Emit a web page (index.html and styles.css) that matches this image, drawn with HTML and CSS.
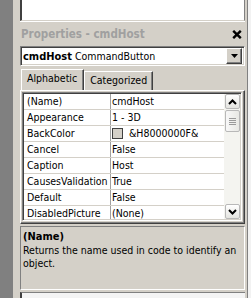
FILE: index.html
```html
<!DOCTYPE html>
<html>
<head>
<meta charset="utf-8">
<title>Properties - cmdHost</title>
<link rel="stylesheet" href="styles.css">
</head>
<body>
<div class="ide">
  <div class="mdi"></div>
  <div class="dock">
    <div class="project"></div>
    <div class="titlebar">
      <span class="title">Properties - cmdHost</span>
      <span class="close"><svg width="10" height="9" viewBox="0 0 10 9"><path d="M1.2 0.8 L8.8 8.2 M8.8 0.8 L1.2 8.2" stroke="#000" stroke-width="2.4" fill="none"/></svg></span>
    </div>
    <div class="combo">
      <span class="obj"><b>cmdHost</b> CommandButton</span>
      <span class="drop"><svg width="7" height="4" viewBox="0 0 7 4"><path d="M0 0 H7 L3.5 4 Z" fill="#000"/></svg></span>
    </div>
    <div class="tabs">
      <div class="tab active">Alphabetic</div>
      <div class="tab">Categorized</div>
    </div>
    <div class="page">
      <div class="grid">
        <div class="rows">
          <div class="row sel"><span class="name">(Name)</span><span class="val">cmdHost</span></div>
          <div class="row"><span class="name">Appearance</span><span class="val">1 - 3D</span></div>
          <div class="row"><span class="name">BackColor</span><span class="val"><span class="swatch"></span>&amp;H8000000F&amp;</span></div>
          <div class="row"><span class="name">Cancel</span><span class="val">False</span></div>
          <div class="row"><span class="name">Caption</span><span class="val">Host</span></div>
          <div class="row"><span class="name">CausesValidation</span><span class="val">True</span></div>
          <div class="row"><span class="name">Default</span><span class="val">False</span></div>
          <div class="row"><span class="name">DisabledPicture</span><span class="val">(None)</span></div>
        </div>
        <div class="scroll">
          <div class="sbtn"><svg width="9" height="6" viewBox="0 0 9 6"><path d="M1 5 L4.5 1.5 L8 5" stroke="#000" stroke-width="2" fill="none"/></svg></div>
          <div class="thumb"><span></span><span></span><span></span><span></span></div>
          <div class="track"></div>
          <div class="sbtn"><svg width="9" height="6" viewBox="0 0 9 6"><path d="M1 1 L4.5 4.5 L8 1" stroke="#000" stroke-width="2" fill="none"/></svg></div>
        </div>
      </div>
    </div>
    <div class="desc">
      <div class="dname">(Name)</div>
      <div class="dtext">Returns the name used in code to identify an object.</div>
    </div>
    <div class="next"></div>
  </div>
  <div class="edge"></div>
</div>
</body>
</html>
```

FILE: styles.css
```css
* { box-sizing: border-box; }
html, body {
  margin: 0;
  padding: 0;
  width: 251px;
  height: 298px;
  overflow: hidden;
  background: #d4d0c8;
  font-family: "DejaVu Sans Condensed", "DejaVu Sans", "Liberation Sans", sans-serif;
  font-stretch: condensed;
  font-size: 10.5px;
  color: #000;
}
.ide {
  display: flex;
  height: 298px;
}
.mdi {
  width: 13px;
  background: #808080;
  flex: none;
}
.dock {
  width: 234px;
  flex: none;
  padding: 0 2px 0 7px;
  display: flex;
  flex-direction: column;
  background: #d4d0c8;
}
.edge {
  flex: 1;
  border-left: 1px solid #808080;
  background: #f2f2f2;
}
.project {
  height: 21px;
  background: #fff;
  border-left: 2px solid #404040;
  border-right: 1px solid #808080;
  border-bottom: 1px solid #d4d0c8;
  box-shadow: 0 1px 0 #fff;
  flex: none;
}
.titlebar {
  margin-top: 4px;
  height: 18px;
  display: flex;
  align-items: center;
  justify-content: space-between;
  flex: none;
}
.title {
  color: #a0a0a0;
  font-weight: bold;
  font-size: 11.5px;
  padding-left: 1px;
  line-height: 18px;
}
.close {
  width: 14px;
  height: 13px;
  margin-right: 1px;
  display: flex;
  align-items: center;
  justify-content: center;
}
.close svg { display: block; }
.combo {
  margin-top: 3px;
  height: 20px;
  flex: none;
  display: flex;
  align-items: center;
  background: #fff;
  border-top: 1px solid #808080;
  border-left: 1px solid #808080;
  border-right: 1px solid #fff;
  border-bottom: 1px solid #fff;
  box-shadow: inset 1px 1px 0 #404040, inset -1px -1px 0 #d4d0c8;
  padding: 2px 2px 2px 2px;
  font-size: 10.5px;
}
.combo b { font-size: 11px; }
.obj {
  flex: 1;
  white-space: nowrap;
  overflow: hidden;
}
.drop {
  width: 16px;
  height: 16px;
  flex: none;
  background: #d4d0c8;
  border-top: 1px solid #fff;
  border-left: 1px solid #fff;
  border-right: 1px solid #404040;
  border-bottom: 1px solid #404040;
  box-shadow: inset -1px -1px 0 #808080;
  display: flex;
  align-items: center;
  justify-content: center;
}
.drop svg { display: block; }
.tabs {
  margin-top: 3px;
  height: 21px;
  flex: none;
  display: flex;
  align-items: flex-end;
  padding-left: 1px;
}
.tab {
  height: 19px;
  padding: 0 5px;
  line-height: 17px;
  border-top: 1px solid #fff;
  border-left: 1px solid #fff;
  border-right: 1px solid #404040;
  box-shadow: inset -1px 0 0 #808080;
}
.tab.active {
  height: 21px;
  line-height: 17px;
  padding: 0 6px 0 5px;
}
.page {
  flex: none;
  border-top: 1px solid #fff;
  border-left: 1px solid #fff;
  border-right: 1px solid #404040;
  border-bottom: 1px solid #404040;
  box-shadow: inset -1px -1px 0 #808080;
  padding: 1px 2px 2px 1px;
}
.grid {
  height: 129px;
  display: flex;
  background: #fff;
  border-top: 1px solid #808080;
  border-left: 1px solid #808080;
  border-right: 1px solid #fff;
  border-bottom: 1px solid #fff;
  box-shadow: inset 1px 1px 0 #404040, inset -1px -1px 0 #d4d0c8;
  padding: 1px;
  overflow: hidden;
}
.rows {
  flex: 1;
  overflow: hidden;
}
.row {
  height: 16px;
  display: flex;
  border-bottom: 1px solid #d4d0c8;
  line-height: 15px;
  white-space: nowrap;
}
.name {
  width: 87px;
  flex: none;
  padding-left: 3px;
  border-right: 1px solid #a0a0a0;
  overflow: hidden;
}
.val {
  flex: 1;
  padding-left: 1px;
  display: flex;
  align-items: center;
  overflow: hidden;
}
.swatch {
  width: 11px;
  height: 11px;
  border: 1px solid #404040;
  background: #d4d0c8;
  margin-right: 6px;
  flex: none;
}
.scroll {
  width: 16px;
  flex: none;
  display: flex;
  flex-direction: column;
  background: #f4f4f0;
  padding-left: 1px;
}
.sbtn {
  height: 15px;
  flex: none;
  border: 1px solid #b8b8b8;
  border-radius: 2px;
  background: linear-gradient(#ffffff, #e4e4e0);
  display: flex;
  align-items: center;
  justify-content: center;
}
.sbtn svg { display: block; }
.thumb {
  margin-top: 1px;
  height: 22px;
  flex: none;
  border: 1px solid #b8b8b8;
  border-radius: 2px;
  background: linear-gradient(90deg, #f8f8f8, #e8e8e4);
  display: flex;
  flex-direction: column;
  align-items: center;
  justify-content: center;
  gap: 1px;
}
.thumb span {
  width: 7px;
  height: 1px;
  background: #9a9a9a;
}
.track { flex: 1; }
.desc {
  margin-top: 2px;
  height: 64px;
  flex: none;
  border-top: 1px solid #808080;
  border-left: 1px solid #808080;
  border-right: 1px solid #fff;
  border-bottom: 1px solid #fff;
  padding: 3px 1px 0 2px;
  line-height: 13px;
}
.dname {
  font-weight: bold;
  font-size: 11px;
  margin-bottom: 1px;
}
.next {
  margin-top: 2px;
  flex: 1;
  background: #f4f4f4;
  border-top: 1px solid #808080;
  border-left: 2px solid #404040;
}
```
